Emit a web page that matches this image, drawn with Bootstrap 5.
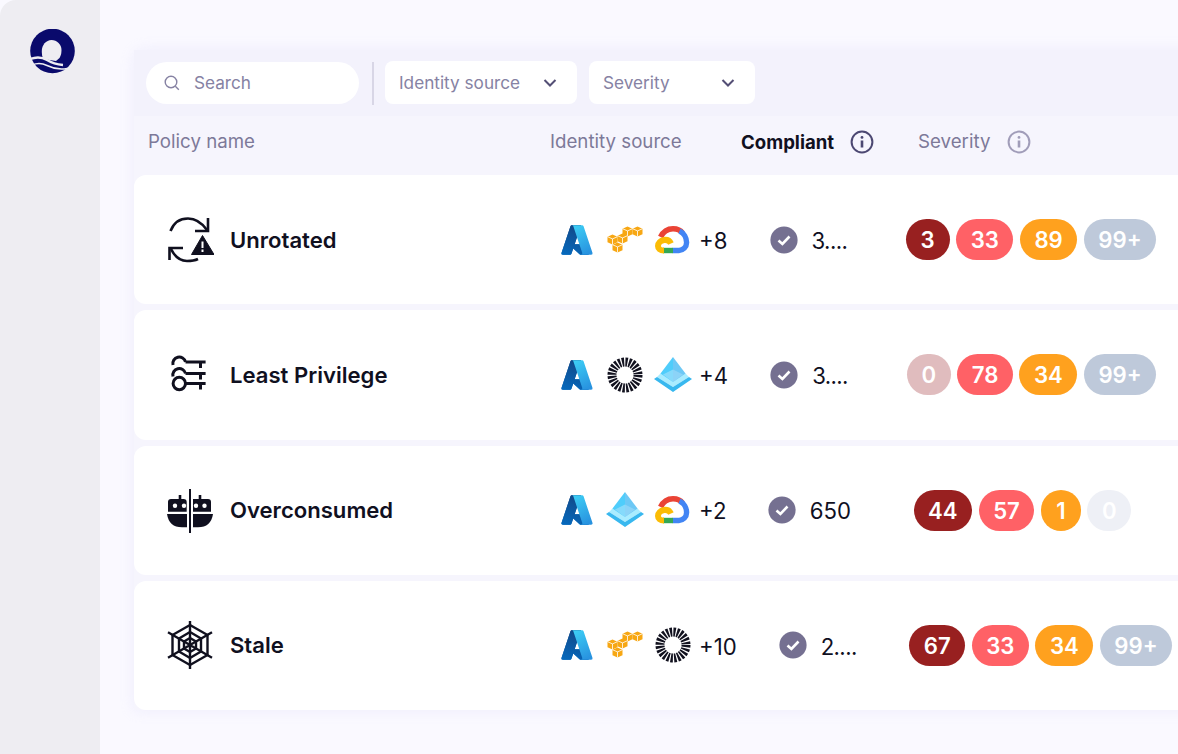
<!DOCTYPE html>
<html lang="en"><head><meta charset="utf-8">
<link href="https://cdn.jsdelivr.net/npm/bootstrap@5.3.0/dist/css/bootstrap.min.css" rel="stylesheet">
<script src="https://cdn.jsdelivr.net/npm/bootstrap@5.3.0/dist/js/bootstrap.bundle.min.js"></script>
<style>
html,body{height:100%;overflow:hidden;background:#fff}
body{font-family:Inter,"Liberation Sans",sans-serif;color:#10101f}
.sprite-defs{position:absolute;width:0;height:0}
.shell{width:1178px;height:754px;overflow:hidden;background:#faf9ff}
.side-rail{width:100px;flex:none;background:#eeedf2;border-top-left-radius:16px;padding:29px 0 0 30px}
.work{flex:1;min-width:0;padding:50px 0 0 34px}
.panel-box{width:1064px;background:#f6f5fd;border-top-left-radius:10px;box-shadow:0 0 14px rgba(225,222,248,.45)}
.tool-row{height:66px;padding:11px 0 0 12px;background:#f3f2fc;gap:13px}
.field-pill{height:42px;width:213px;background:#fff;border-radius:21px;padding-left:18px;gap:14px;font-size:17.2px;color:#8682a3;margin-top:1px}
.tool-sep{width:2px;height:43px;background:#d8d6e6;margin-top:1px}
.drop-box{height:43px;background:#fff;border-radius:8px;padding:0 20px 0 14px;font-size:17.2px;color:#8682a3;justify-content:space-between}
.drop-a{width:192px;margin-left:-2px}
.drop-b{width:166px;margin-left:-1px}
.head-row{height:59px;padding-left:14px;font-size:18.7px;color:#7d7999;padding-bottom:6px}
.h-name{width:402px}.h-src{width:191px}.h-comp{width:177px;color:#10101f;font-weight:700;gap:16px;font-size:18.6px}.h-sev{gap:17px}
.info-a{color:#4c4872}.info-b{color:#a19db9}
.card-stack{gap:6px;width:1064px}
.pol-card{height:129.25px;background:#fff;border:0;border-radius:12px;padding-left:32px}
.pol-ico{width:48px;height:48px;flex:none}
.pol-name{width:330px;flex:none;margin-left:16px;font-size:22.1px;font-weight:600;padding-top:1px}
.src-group{gap:12px;margin-left:-1px}
.src-ico{width:36px;height:36px;flex:none}
.src-wide{width:38px;margin:0 -1px}
.src-more{font-size:22.2px;margin-left:-4px;color:#10101f;padding-top:2px}
.comp-box{width:120px;margin-left:23px;gap:14px;font-size:22.2px;justify-content:center;flex:none}
.comp-box span{padding-top:2px}
.comp-box .dots{letter-spacing:-.6px;margin-right:4px}
.sev-box{width:280px;margin-left:20.5px;gap:6.5px;justify-content:center;flex:none}
.sev-shift{padding-right:15px}
.sev-nudge{padding-left:1px}
.sev-pill{height:41px;min-width:44px;border-radius:21px;padding:0 14.5px;color:#fff;font-size:22.2px;font-weight:600;line-height:41px;text-align:center}
.sev-tight{min-width:40px;padding:0 10px}
.c-crit{background:#982020}.c-high{background:#ff6166}.c-med{background:#ffa11e}.c-low{background:#bec9da}
.c-crit0{background:#e0bcbe}.c-none{background:#eef0f6}
</style></head><body>
<svg class="sprite-defs">
<defs>
<linearGradient id="az1" x1="45%" y1="5%" x2="15%" y2="100%"><stop offset="0" stop-color="#114a8b"/><stop offset="1" stop-color="#0669bc"/></linearGradient>
<linearGradient id="az2" x1="30%" y1="0" x2="70%" y2="100%"><stop offset="0" stop-color="#3ccbf4"/><stop offset="1" stop-color="#2892df"/></linearGradient>
<symbol id="azure" viewBox="-3 -3 102 102">
<path fill="url(#az1)" d="M33.338 6.544h26.038l-27.03 80.087a4.152 4.152 0 0 1-3.933 2.824H8.149a4.145 4.145 0 0 1-3.928-5.47L29.404 9.368a4.152 4.152 0 0 1 3.934-2.825z"/>
<path fill="#0078d4" d="M71.175 60.261h-41.29a1.911 1.911 0 0 0-1.305 3.309l26.532 24.764a4.171 4.171 0 0 0 2.846 1.121h23.38z"/>
<path fill="url(#az1)" d="M33.338 6.544a4.118 4.118 0 0 0-3.943 2.879L4.252 83.917a4.14 4.14 0 0 0 3.908 5.538h20.787a4.443 4.443 0 0 0 3.41-2.9l5.014-14.777 17.91 16.705a4.237 4.237 0 0 0 2.666.972H81.24L71.024 60.261l-29.781.007L59.47 6.544z"/>
<path fill="url(#az2)" d="M66.595 9.364a4.145 4.145 0 0 0-3.928-2.82H33.648a4.146 4.146 0 0 1 3.928 2.82l25.184 74.62a4.146 4.146 0 0 1-3.928 5.472h29.02a4.146 4.146 0 0 0 3.927-5.472z"/>
</symbol>
<g id="cube"><path fill="#f7a713" d="M5 0 10 2.200V7.800L5 10 0 7.800V2.200z"/><path fill="none" stroke="#fff" stroke-width=".8" d="M0 2.200 5 4.400 10 2.200M5 4.400V10"/></g>
<symbol id="aws" viewBox="0 0 36 36">
<use href="#cube" x="15.500" y="4.500"/><use href="#cube" x="25.500" y="4.500"/><use href="#cube" x=".5" y="12.500"/><use href="#cube" x="10.500" y="11.500"/><use href="#cube" x="5.500" y="20.500"/>
</symbol>
<symbol id="gcloud" viewBox="0 0 36 36">
<path fill="none" stroke="#ea4335" stroke-width="5.400" d="M5.500 15C8.500 9 13 6.700 18 6.700 22 6.700 25.500 8 27.500 11"/>
<path fill="none" stroke="#4285f4" stroke-width="5.400" d="M24.500 9C29 11 31.600 16 31.600 20.500 31.600 25 28 28.500 24 28.500H17.500"/>
<path fill="none" stroke="#34a853" stroke-width="5.400" d="M8 28.500H18"/>
<path fill="none" stroke="#fbbc05" stroke-width="6" d="M16 21.500C14.500 18.500 12 17.500 9 18 5.500 18.700 3 21 3 24 3 26.500 5 28.500 9 28.500"/>
</symbol>
<symbol id="burst" viewBox="0 0 36 36">
<circle cx="18" cy="18" r="13" fill="none" stroke="#12121f" stroke-width="9" stroke-dasharray="2.200 1.203"/>
</symbol>
<symbol id="entra" viewBox="0 0 38 36">
<path fill="#a9ecff" d="M3 20 19 30 35 20 31 16 7 16z"/>
<path fill="#38b8ef" d="M0 22 19 35 38 22 35 20 19 30 3 20z"/>
<path fill="#4fcdfb" d="M19 0 6.500 16.500 19 25z"/>
<path fill="#6dc8f5" d="M19 0 31.500 16.500 19 25z"/>
<path fill="#b4e6fb" d="M9 17.500 19 12.500 19 25z" opacity=".55"/>
<path fill="#a6dcf7" d="M29 17.500 19 12.500 19 25z" opacity=".55"/>
</symbol>
<symbol id="info" viewBox="0 0 24 24">
<circle cx="12" cy="12" r="10.400" fill="none" stroke="currentColor" stroke-width="2"/>
<circle cx="12" cy="7.400" r="1.400" fill="currentColor"/><path d="M12 10.500V17.500" stroke="currentColor" stroke-width="2.600"/>
</symbol>
<symbol id="tick" viewBox="0 0 28 28">
<circle cx="14" cy="14" r="13.600" fill="#757091"/>
<path d="M8.500 14.500 12.400 18 19.500 10.500" fill="none" stroke="#fff" stroke-width="2.600"/>
</symbol>
<symbol id="chev" viewBox="0 0 14 10"><path d="M1.500 2 7 7.500 12.500 2" fill="none" stroke="#544f75" stroke-width="2"/></symbol>
</defs></svg>

<div class="shell d-flex">
<aside class="side-rail">
<svg width="46" height="46" viewBox="0 0 46 46" role="img" aria-label="Logo">
<circle cx="22.500" cy="22" r="22.300" fill="#0a0a6c"/>
<path fill="#eeedf2" d="M11.800 22C11.800 16 16 11 21.500 11 27 11 31.500 15.500 31.500 21 31.500 24 31 26.500 29.500 29L26 32 13 30C12.300 27.500 11.800 25 11.800 22z"/>
<path fill="none" stroke="#eeedf2" stroke-width="2.300" d="M-1 30.500C6 27.500 11 27.500 17 31 22 34 28 35.500 33 36"/>
<path fill="none" stroke="#eeedf2" stroke-width="1.500" d="M2 36C8 33.500 12 34 17 36.500 23 39.500 29 41 37 39.500"/>
</svg>
</aside>
<main class="work">
<div class="panel-box">
<div class="tool-row d-flex align-items-start">
<div class="field-pill d-flex align-items-center"><svg width="16" height="16" viewBox="0 0 16 16"><circle cx="7" cy="7" r="5.800" fill="none" stroke="#8682a3" stroke-width="1.400"/><path d="M11.300 11.300 14.800 14.800" stroke="#8682a3" stroke-width="1.400"/></svg><span>Search</span></div>
<div class="tool-sep"></div>
<div class="drop-box drop-a d-flex align-items-center"><span>Identity source</span><svg width="14" height="10"><use href="#chev"/></svg></div>
<div class="drop-box drop-b d-flex align-items-center"><span>Severity</span><svg width="14" height="10"><use href="#chev"/></svg></div>
</div>
<div class="head-row d-flex align-items-center">
<div class="h-name">Policy name</div><div class="h-src">Identity source</div>
<div class="h-comp d-flex align-items-center">Compliant<svg width="24" height="24" class="info-a"><use href="#info"/></svg></div>
<div class="h-sev d-flex align-items-center">Severity<svg width="24" height="24" class="info-b"><use href="#info"/></svg></div>
</div>
<div class="card-stack d-flex flex-column">

<div class="pol-card d-flex align-items-center">
<svg class="pol-ico" viewBox="0 0 48 48"><g fill="none" stroke="#10101f" stroke-width="2.600"><path d="M4.500 15C8 6 14 2.500 22 2.500 30 2.500 36 7 41 14"/><path d="M42 2V15H29"/><path d="M3.500 44V32H17"/><path d="M5 33C9 41 14 45 21 45 25 45 29 44.500 32 43"/></g><path fill="#10101f" d="M36.500 19.500 48 38.500H25.500z" stroke="#10101f" stroke-linejoin="round"/><path d="M36.500 25.500V32M36.500 33.500V36" stroke="#fff" stroke-width="2"/></svg>
<div class="pol-name">Unrotated</div>
<div class="src-group d-flex align-items-center"><svg class="src-ico"><use href="#azure"/></svg><svg class="src-ico"><use href="#aws"/></svg><svg class="src-ico"><use href="#gcloud"/></svg><span class="src-more">+8</span></div>
<div class="comp-box d-flex align-items-center"><svg width="28" height="28"><use href="#tick"/></svg><span class="dots">3....</span></div>
<div class="sev-box d-flex"><span class="sev-pill c-crit">3</span><span class="sev-pill c-high">33</span><span class="sev-pill c-med">89</span><span class="sev-pill c-low">99+</span></div>
</div>

<div class="pol-card d-flex align-items-center">
<svg class="pol-ico" viewBox="0 0 48 48"><g fill="none" stroke="#10101f" stroke-width="3"><circle cx="13.300" cy="32.500" r="6.200"/><path d="M7 14A6.400 6.400 0 0 1 19.500 11M7 25.500A6.400 6.400 0 0 1 19.500 22.500M19.500 32.500H39.600M34.500 32.500V38.500M19.500 22.500H39.600M34.500 22.500V28.500M19.500 11H39.600M34.500 11V17"/></g></svg>
<div class="pol-name">Least Privilege</div>
<div class="src-group d-flex align-items-center"><svg class="src-ico"><use href="#azure"/></svg><svg class="src-ico"><use href="#burst"/></svg><svg class="src-ico src-wide"><use href="#entra"/></svg><span class="src-more">+4</span></div>
<div class="comp-box d-flex align-items-center"><svg width="28" height="28"><use href="#tick"/></svg><span class="dots">3....</span></div>
<div class="sev-box d-flex"><span class="sev-pill c-crit0">0</span><span class="sev-pill c-high">78</span><span class="sev-pill c-med">34</span><span class="sev-pill c-low">99+</span></div>
</div>

<div class="pol-card d-flex align-items-center">
<svg class="pol-ico" viewBox="0 0 48 48"><path fill="#10101f" d="M23 3H25V47H23zM12.700 9H15.300V13H17.500Q20.700 13 20.700 16V25.700H2V16Q2 13 5 13H12.700zM32.700 9H35.300V13H42Q45 13 45 16V25.700H27V13H32.700z"/><path fill="#10101f" d="M1 28H21V41.300H16Q3 41.300 1 28zM27 28H47Q45 41.300 32 41.300H27z"/><g fill="#fff"><circle cx="9" cy="19.700" r="2.200"/><circle cx="18" cy="19.700" r="2.200"/><circle cx="30" cy="19.700" r="2.200"/><circle cx="38.500" cy="19.700" r="2.200"/></g></svg>
<div class="pol-name">Overconsumed</div>
<div class="src-group d-flex align-items-center"><svg class="src-ico"><use href="#azure"/></svg><svg class="src-ico src-wide"><use href="#entra"/></svg><svg class="src-ico"><use href="#gcloud"/></svg><span class="src-more">+2</span></div>
<div class="comp-box d-flex align-items-center"><svg width="28" height="28"><use href="#tick"/></svg><span>650</span></div>
<div class="sev-box sev-shift d-flex"><span class="sev-pill c-crit">44</span><span class="sev-pill c-high">57</span><span class="sev-pill c-med sev-tight">1</span><span class="sev-pill c-none">0</span></div>
</div>

<div class="pol-card d-flex align-items-center">
<svg class="pol-ico" viewBox="0 0 48 48"><g fill="none" stroke="#10101f" stroke-width="2.400" stroke-linejoin="round"><path d="M24 0V48M2 11.300 46 36.700M46 11.300 2 36.700"/><path d="M24 4 41.500 14V34L24 44 6.500 34V14z"/><path d="M24 11 35 17.500V30.500L24 37 13 30.500V17.500z"/><path d="M24 17 30 20.500V27.500L24 31 18 27.500V20.500z"/></g></svg>
<div class="pol-name">Stale</div>
<div class="src-group d-flex align-items-center"><svg class="src-ico"><use href="#azure"/></svg><svg class="src-ico"><use href="#aws"/></svg><svg class="src-ico"><use href="#burst"/></svg><span class="src-more">+10</span></div>
<div class="comp-box d-flex align-items-center"><svg width="28" height="28"><use href="#tick"/></svg><span class="dots">2....</span></div>
<div class="sev-box sev-nudge d-flex"><span class="sev-pill c-crit">67</span><span class="sev-pill c-high">33</span><span class="sev-pill c-med">34</span><span class="sev-pill c-low">99+</span></div>
</div>

</div>
</div>
</main>
</div>
</body></html>
